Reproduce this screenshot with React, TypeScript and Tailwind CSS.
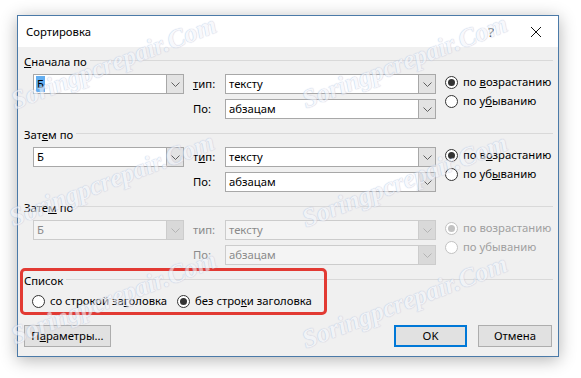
import React from "react";

type ComboProps = {
  value: string;
  width: string;
  disabled?: boolean;
  selected?: boolean;
};

function Chevron({ disabled }: { disabled?: boolean }) {
  return (
    <svg width="9" height="5" viewBox="0 0 9 5" fill="none">
      <polyline
        points="0.5,0.5 4.5,4.5 8.5,0.5"
        stroke={disabled ? "#b4b4b4" : "#606060"}
        strokeWidth="1"
      />
    </svg>
  );
}

function Combo({ value, width, disabled, selected }: ComboProps) {
  return (
    <div
      className={`${width} flex h-[20px] border ${
        disabled ? "border-[#cccccc] bg-[#f4f4f4] text-[#8a8a8a]" : "border-[#a8a8a8] bg-white text-black"
      }`}
    >
      <div className="flex flex-1 items-center pl-[2px]">
        {selected ? <span className="bg-[#63aef0] px-[1px]">{value}</span> : <span className="pl-[1px]">{value}</span>}
      </div>
      <div
        className={`flex w-[17px] items-center justify-center border-l ${
          disabled ? "border-[#cccccc] bg-[#d9d9d9]" : "border-[#a8a8a8] bg-[#e3e3e3]"
        }`}
      >
        <Chevron disabled={disabled} />
      </div>
    </div>
  );
}

function Radio({ checked, disabled, children }: { checked?: boolean; disabled?: boolean; children: React.ReactNode }) {
  return (
    <div className={`flex h-[16px] items-center gap-[5px] whitespace-nowrap ${disabled ? "text-[#a0a0a0]" : "text-black"}`}>
      <span
        className={`flex h-[13px] w-[13px] shrink-0 items-center justify-center rounded-full border bg-white ${
          disabled ? "border-[#c2c2c2]" : "border-[#333333]"
        }`}
      >
        {checked && <span className={`h-[7px] w-[7px] rounded-full ${disabled ? "bg-[#c2c2c2]" : "bg-[#333333]"}`} />}
      </span>
      <span>{children}</span>
    </div>
  );
}

function Header({ children }: { children: React.ReactNode }) {
  return (
    <div className="flex h-[16px] items-center">
      <span className="whitespace-nowrap">{children}</span>
      <div className="ml-[3px] mt-[-3px] h-px flex-1 bg-[#d9d9d9]" />
    </div>
  );
}

type SectionProps = {
  title: React.ReactNode;
  typeLabel: React.ReactNode;
  asc: React.ReactNode;
  desc: React.ReactNode;
  disabled?: boolean;
  selected?: boolean;
  className?: string;
};

function Section({ title, typeLabel, asc, desc, disabled, selected, className }: SectionProps) {
  const lbl = disabled ? "text-[#8a8a8a]" : "text-black";
  return (
    <div className={className}>
      <Header>{title}</Header>
      <div className="ml-[9px] mt-[4px] flex">
        <Combo value="Б" width="w-[151px]" disabled={disabled} selected={selected} />
        <div className="ml-[9px] flex flex-col gap-[5px]">
          <div className="flex items-center">
            <span className={`w-[32px] ${lbl}`}>{typeLabel}</span>
            <Combo value="тексту" width="w-[211px]" disabled={disabled} />
          </div>
          <div className="flex items-center">
            <span className={`w-[32px] ${lbl}`}>По:</span>
            <Combo value="абзацам" width="w-[211px]" disabled={disabled} />
          </div>
        </div>
        <div className="ml-[9px] flex flex-col gap-[3px]">
          <Radio checked disabled={disabled}>
            {asc}
          </Radio>
          <Radio disabled={disabled}>{desc}</Radio>
        </div>
      </div>
    </div>
  );
}

const marks = [
  "left-[114px] top-[63px]",
  "left-[405px] top-[62px]",
  "left-[112px] top-[180px]",
  "left-[405px] top-[181px]",
  "left-[114px] top-[298px]",
  "left-[405px] top-[302px]",
];

export default function App() {
  return (
    <div className="relative h-[378px] w-[581px] overflow-hidden bg-white pl-[17px] pt-[15px] font-['Noto_Sans',sans-serif] text-[11.3px] leading-[16px] text-black">
      <div className="flex h-[342px] w-[542px] flex-col border border-[#4b7aa8] bg-[#f0f0f0] shadow-[0_3px_16px_rgba(0,0,0,0.3)]">
        <div className="flex h-[31px] items-center bg-white pl-[8px]">
          <span>Сортировка</span>
          <span className="ml-auto text-[13px]">?</span>
          <svg className="ml-[37px] mr-[17px]" width="10" height="10" viewBox="0 0 10 10">
            <path d="M0 0 L10 10 M10 0 L0 10" stroke="#111" strokeWidth="1" />
          </svg>
        </div>

        <div className="flex flex-1 flex-col pl-[6px] pr-[5px] pt-[7px]">
          <Section
            title={<><u>С</u>начала по</>}
            typeLabel={<><u>т</u>ип:</>}
            asc={<>по <u>в</u>озрастанию</>}
            desc={<>по у<u>б</u>ыванию</>}
            selected
          />
          <Section
            className="mt-[8px]"
            title={<>Зат<u>е</u>м по</>}
            typeLabel={<>т<u>и</u>п:</>}
            asc={<>по в<u>о</u>зрастанию</>}
            desc={<>по уб<u>ы</u>ванию</>}
          />
          <Section
            className="mt-[8px]"
            title={<>Зате<u>м</u> по</>}
            typeLabel="тип:"
            asc="по возрастанию"
            desc="по убыванию"
            disabled
          />

          <div className="mt-[8px]">
            <Header>Список</Header>
            <div className="ml-[8px] mt-[4px] flex">
              <div className="w-[145px]">
                <Radio>со строкой за<u>г</u>оловка</Radio>
              </div>
              <Radio checked>без стро<u>к</u>и заголовка</Radio>
            </div>
          </div>

          <div className="mt-[16px] flex">
            <button className="h-[22px] w-[87px] border border-[#adadad] bg-[#e1e1e1]">
              П<u>а</u>раметры...
            </button>
            <button className="ml-auto h-[22px] w-[73px] border-2 border-[#0078d7] bg-[#e1e1e1]">OK</button>
            <button className="ml-[11px] mr-[1px] h-[22px] w-[74px] border border-[#adadad] bg-[#e1e1e1]">Отмена</button>
          </div>
        </div>
      </div>

      <div className="absolute left-[20px] top-[268px] h-[47px] w-[307px] rounded-[5px] border-[3px] border-[#e23a33]" />

      {marks.map((pos) => (
        <span
          key={pos}
          className={`pointer-events-none absolute ${pos} -translate-x-1/2 -translate-y-1/2 -rotate-[21deg] whitespace-nowrap font-['Liberation_Serif',serif] text-[26px] font-bold italic leading-none text-[#f3f5fb] opacity-60 [text-shadow:0_0_1px_#9aa8cc,0_0_1px_#b4bfdc]`}
        >
          Soringpcrepair.Com
        </span>
      ))}
    </div>
  );
}
